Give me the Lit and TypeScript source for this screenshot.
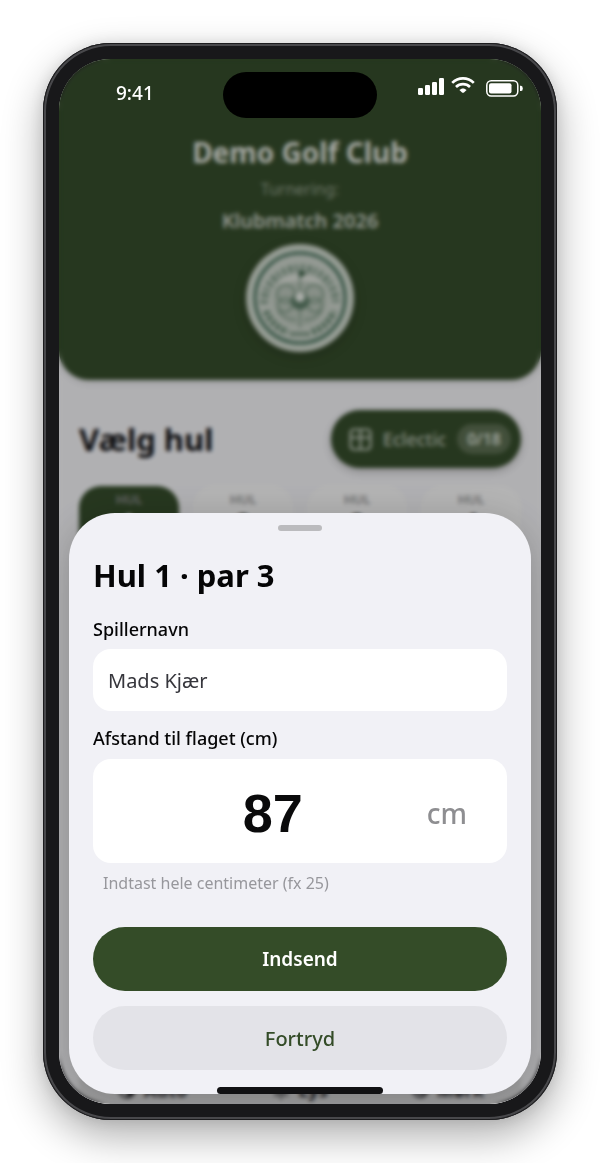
import { LitElement, html, css, svg } from "lit";
import { customElement, property, state } from "lit/decorators.js";
import { classMap } from "lit/directives/class-map.js";

@customElement("club-emblem")
class ClubEmblem extends LitElement {
  static styles = css`
    :host { display: block; width: 108px; height: 108px; border-radius: 50%; box-shadow: 0 4px 14px rgba(0, 0, 0, 0.2); }
    svg { display: block; width: 100%; height: 100%; }
  `;

  render() {
    return html`
      <svg viewBox="0 0 108 108" fill="none" aria-hidden="true">
        <circle cx="54" cy="54" r="54" fill="#cdd6cb" />
        <circle cx="54" cy="54" r="45" fill="#cbd3ca" stroke="#45705a" stroke-width="3" />
        <path d="M18 60A36 36 0 0 1 90 60" stroke="#88a08f" stroke-width="8" stroke-dasharray="4 2.4 5 2 3 2.6" />
        <path d="M20 67A36 36 0 0 0 42 88" stroke="#6a8a74" stroke-width="7" stroke-dasharray="4 2" />
        <path d="M66 88A36 36 0 0 0 88 67" stroke="#6a8a74" stroke-width="7" stroke-dasharray="4 2" />
        <path d="M45 90H64" stroke="#5f8069" stroke-width="5" stroke-dasharray="3 2" />
        <circle cx="54" cy="56" r="27" fill="#bac5ba" />
        <path d="M30 42C38 26 70 26 78 42C68 36 40 36 30 42Z" fill="#dbe0d9" />
        <path d="M54 28V84" stroke="#7d9784" stroke-width="1.6" />
        <path d="M53 26L61 29.5L53 34Z" fill="#33593f" />
        ${[-1, 1].map(
          (s) => svg`
            <g transform="translate(54 54) scale(${s} 1)" stroke="#7f9986" stroke-width="2">
              <circle cx="14" cy="-4" r="9" />
              <circle cx="15" cy="7" r="7" />
              <path d="M4 22C12 22 18 18 22 12" />
            </g>`,
        )}
        <circle cx="54" cy="57" r="9" fill="#5d7d67" />
        <circle cx="54" cy="53" r="5" fill="#e8ece6" />
      </svg>
    `;
  }
}

@customElement("status-bar")
class StatusBar extends LitElement {
  static styles = css`
    :host { display: grid; grid-template-columns: 1fr auto 1fr; padding-top: 13px; color: #fff; }
    .time { padding: 8px 0 0 57px; font-size: 19px; line-height: 26px; font-weight: 500; }
    .island { width: 154px; height: 46px; border-radius: 23px; background: #000; }
    .icons { display: flex; justify-content: flex-end; gap: 7px; padding: 4px 18px 0 0; }
    .icons svg { display: block; }
    .battery { margin: 4px 0 0 4px; }
  `;

  render() {
    return html`
      <div class="time">9:41</div>
      <div class="island"></div>
      <div class="icons">
        <svg width="26" height="20" viewBox="0 0 26 20" fill="#fff" aria-hidden="true">
          <rect x="0" y="12" width="5" height="7" rx="1.2" />
          <rect x="7" y="9" width="5" height="10" rx="1.2" />
          <rect x="14" y="6" width="5" height="13" rx="1.2" />
          <rect x="21" y="2" width="5" height="17" rx="1.2" />
        </svg>
        <svg width="24" height="18" viewBox="0 0 24 18" fill="none" stroke="#fff" stroke-width="2.7" aria-hidden="true">
          <path d="M1.2 6.9C7.4 0.9 16.6 0.9 22.8 6.9" />
          <path d="M5 11C9 7.2 15 7.2 19 11" />
          <path d="M8.4 14.1C10.5 11.9 13.5 11.9 15.6 14.1L13 16.4Q12 17.2 11 16.4Z" fill="#fff" stroke="none" />
        </svg>
        <svg class="battery" width="37" height="17" viewBox="0 0 37 17" aria-hidden="true">
          <rect x="0.8" y="0.8" width="31" height="15.2" rx="4.4" fill="none" stroke="#fff" stroke-width="1.5" />
          <rect x="3" y="3.2" width="22.5" height="10.4" rx="2" fill="#fff" />
          <path d="M34 5.8H35Q36.8 5.8 36.8 8.4Q36.8 11 35 11H34Z" fill="#fff" />
        </svg>
      </div>
    `;
  }
}

@customElement("club-home")
class ClubHome extends LitElement {
  @property({ type: Number }) hole = 1;

  static styles = css`
    :host { display: flex; flex-direction: column; background: #f2f2f5; color: #111114; }
    header {
      display: flex; flex-direction: column; align-items: center;
      padding: 73px 20px 28px; border-radius: 0 0 30px 30px;
      background: #354c2b; color: #e2e6df;
      box-shadow: 0 2px 8px rgba(0, 0, 0, 0.15);
    }
    h1 { margin: 0; font-size: 28px; line-height: 40px; font-weight: 700; }
    .kind { margin-top: 6px; font-size: 16px; line-height: 22px; color: #94a18d; }
    .event { margin: 7px 0 9px; font-size: 20px; line-height: 28px; font-weight: 600; color: #cad1c6; }
    main { flex: 1; padding: 30px 20px; }
    .bar { display: flex; justify-content: space-between; align-items: center; }
    h2 { margin: 0; font-size: 31px; line-height: 44px; font-weight: 700; }
    button { font: inherit; border: 0; }
    .eclectic {
      display: flex; align-items: center; gap: 11px; height: 58px; padding: 0 10px 0 18px;
      border-radius: 29px; background: #354c2b; color: #b9c2b4; font-size: 18px; font-weight: 500;
      box-shadow: 0 3px 10px rgba(0, 0, 0, 0.25);
    }
    .count { padding: 0 10px; border-radius: 15px; background: #5b6d51; color: #dce2d9; font-size: 16px; line-height: 30px; font-weight: 600; }
    .holes { display: grid; grid-template-columns: repeat(4, 1fr); gap: 14px; margin-top: 18px; }
    .hole {
      display: flex; flex-direction: column; align-items: center; justify-content: flex-start; height: 88px; padding: 4px 0 0;
      border-radius: 22px; background: #f7f7f7; color: #111;
    }
    .hole small { font-size: 13px; line-height: 18px; font-weight: 600; color: #939395; }
    .hole b { font-family: "Liberation Sans", Arial, sans-serif; font-size: 26px; line-height: 30px; }
    .on { background: #354c2b; color: #fff; }
    nav { display: grid; grid-template-columns: repeat(3, 1fr); margin: 0 20px; padding-bottom: 1px; background: #dededf; }
    nav button { display: flex; justify-content: center; align-items: center; gap: 8px; height: 26px; padding: 0; background: none; font-size: 18px; font-weight: 700; color: #26262a; }
  `;

  render() {
    return html`
      <header>
        <h1>Demo Golf Club</h1>
        <div class="kind">Turnering:</div>
        <div class="event">Klubmatch 2026</div>
        <club-emblem></club-emblem>
      </header>
      <main>
        <div class="bar">
          <h2>Vælg hul</h2>
          <button class="eclectic" type="button">
            <svg width="23" height="23" viewBox="0 0 23 23" fill="none" stroke="#c0c9bb" stroke-width="2.2" aria-hidden="true">
              <rect x="1.5" y="1.5" width="20" height="20" rx="3.5" />
              <path d="M1.5 9.5H21.5M11.5 1.5V21.5" />
            </svg>
            <span>Eclectic</span>
            <span class="count">0/18</span>
          </button>
        </div>
        <div class="holes">
          ${[1, 2, 3, 4].map(
            (n) => html`
              <button type="button" class=${classMap({ hole: true, on: n === this.hole })}>
                <small>HUL</small><b>${n}</b>
              </button>`,
          )}
        </div>
      </main>
      <nav>
        <button type="button">
          <svg width="18" height="18" viewBox="0 0 18 18" aria-hidden="true"><circle cx="9" cy="9" r="7.5" fill="none" stroke="#26262a" stroke-width="2" /><path d="M9 2A7 7 0 0 1 9 16Z" fill="#26262a" /></svg>
          Auto
        </button>
        <button type="button">
          <svg width="18" height="18" viewBox="0 0 18 18" stroke="#26262a" stroke-width="2" fill="none" aria-hidden="true"><circle cx="9" cy="9" r="3.5" /><path d="M9 0V3M9 15V18M0 9H3M15 9H18M3 3L5 5M13 13L15 15M3 15L5 13M13 5L15 3" /></svg>
          Lys
        </button>
        <button type="button">
          <svg width="18" height="18" viewBox="0 0 18 18" fill="none" stroke="#26262a" stroke-width="2" aria-hidden="true"><path d="M8 2A7 7 0 1 0 16 11A6 6 0 0 1 8 2Z" /></svg>
          Mørk
        </button>
      </nav>
    `;
  }
}

@customElement("score-sheet")
class ScoreSheet extends LitElement {
  @property({ type: Number }) hole = 1;
  @property({ type: Number }) par = 3;
  @state() private player = "Mads Kjær";
  @state() private distance = "87";

  static styles = css`
    :host { display: block; position: relative; padding: 12px 24px 24px; border-radius: 46px; background: #f1f1f6; color: #050506; box-shadow: 0 8px 40px rgba(0, 0, 0, 0.22); }
    form { display: flex; flex-direction: column; }
    .grip { width: 44px; height: 6px; margin: 0 auto; border-radius: 3px; background: #bbbbbe; }
    h2 { margin: 22px 0 20px; font-size: 31px; line-height: 44px; font-weight: 700; }
    label { font-size: 18px; line-height: 24px; font-weight: 500; }
    input { min-width: 0; border: 0; outline: 0; font: inherit; background: #fff; }
    .name { height: 62px; margin: 8px 0 15px; padding: 0 15px; border-radius: 18px; font-size: 20px; color: #36363c; }
    .measure { display: flex; align-items: center; margin-top: 9px; height: 104px; padding: 4px 40px 0 26px; box-sizing: border-box; border-radius: 18px; background: #fff; }
    .measure input { flex: 1; height: 64px; padding: 0; text-align: center; font: 700 54px "Liberation Sans", Arial, sans-serif; color: #0a0a0b; }
    .unit { font-size: 28px; line-height: 36px; font-weight: 500; color: #8e8e91; }
    .hint { margin: 9px 10px 33px; font-size: 16px; line-height: 22px; color: #97979c; }
    button { height: 64px; border: 0; border-radius: 32px; font: inherit; font-size: 20px; }
    .send { background: #344c28; color: #fff; font-size: 19px; font-weight: 600; }
    .cancel { margin-top: 15px; background: #e3e3e8; color: #344c28; font-weight: 500; }
    .home { position: absolute; left: 50%; bottom: 0; width: 166px; height: 7px; transform: translateX(-50%); border-radius: 4px; background: #111113; }
  `;

  render() {
    return html`
      <form @submit=${(e: Event) => e.preventDefault()}>
        <div class="grip"></div>
        <h2>Hul ${this.hole} · par ${this.par}</h2>
        <label for="player">Spillernavn</label>
        <input id="player" class="name" type="text" .value=${this.player}
          @input=${(e: Event) => (this.player = (e.target as HTMLInputElement).value)} />
        <label for="distance">Afstand til flaget (cm)</label>
        <div class="measure">
          <input id="distance" type="text" inputmode="numeric" aria-describedby="hint" .value=${this.distance}
            @input=${(e: Event) => (this.distance = (e.target as HTMLInputElement).value)} />
          <span class="unit">cm</span>
        </div>
        <div id="hint" class="hint">Indtast hele centimeter (fx 25)</div>
        <button class="send" type="submit">Indsend</button>
        <button class="cancel" type="button">Fortryd</button>
      </form>
      <div class="home"></div>
    `;
  }
}

@customElement("app-root")
class AppRoot extends LitElement {
  static styles = css`
    :host { display: block; box-sizing: border-box; padding: 43px; background: #fff; font-family: "Noto Sans", "Open Sans", sans-serif; }
    .phone {
      box-sizing: border-box; display: grid; min-height: calc(100vh - 86px); max-width: 514px; margin: 0 auto; padding: 16px;
      border-radius: 68px; background: #18181a;
      box-shadow: inset 0 0 0 1px #1c1c1e, inset 0 0 0 3px #48484b, 0 16px 40px rgba(0, 0, 0, 0.32), 0 0 14px rgba(0, 0, 0, 0.1);
    }
    .screen { display: grid; border-radius: 52px; overflow: hidden; }
    club-home, .overlay { grid-area: 1 / 1; min-width: 0; }
    .overlay {
      display: flex; flex-direction: column; justify-content: space-between; gap: 40px;
      background: rgba(0, 0, 0, 0.27); backdrop-filter: blur(2px);
    }
    score-sheet { margin: 0 10px 10px; }
  `;

  render() {
    return html`
      <div class="phone">
        <div class="screen">
          <club-home .hole=${1}></club-home>
          <div class="overlay">
            <status-bar></status-bar>
            <score-sheet .hole=${1} .par=${3}></score-sheet>
          </div>
        </div>
      </div>
    `;
  }
}
